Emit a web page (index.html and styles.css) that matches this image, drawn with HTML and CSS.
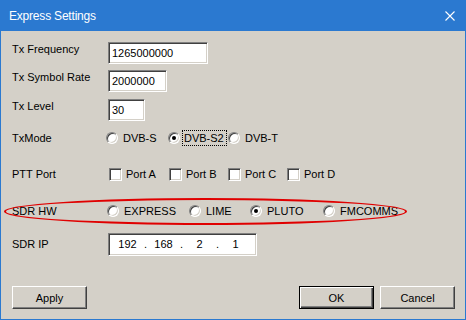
FILE: index.html
```html
<!DOCTYPE html>
<html lang="en">
<head>
  <meta charset="UTF-8">
  <title>Express Settings</title>
  <link rel="stylesheet" href="styles.css">
</head>
<body>
  <div class="window">
    <!-- Title bar -->
    <div class="titlebar">
      <span class="title">Express Settings</span>
      <svg class="close" width="10" height="10" viewBox="0 0 10 10">
        <path d="M0.5 0.5 L9.5 9.5 M9.5 0.5 L0.5 9.5" stroke="#fff" stroke-width="1.1" fill="none"/>
      </svg>
    </div>

    <div class="content">
      <div class="form">
        <div class="row row-text">
          <label class="lbl">Tx Frequency</label>
          <div class="edit edit-freq">1265000000</div>
        </div>
        <div class="row row-text row-sym">
          <label class="lbl">Tx Symbol Rate</label>
          <div class="edit edit-sym">2000000</div>
        </div>
        <div class="row row-text row-level">
          <label class="lbl">Tx Level</label>
          <div class="edit edit-level">30</div>
        </div>

        <div class="row row-opt row-mode">
          <label class="lbl">TxMode</label>
          <div class="opts opts-mode">
            <span class="opt"><i class="radio"></i><span>DVB-S</span></span>
            <span class="opt"><i class="radio on"></i><span class="focus">DVB-S2</span></span>
            <span class="opt"><i class="radio"></i><span>DVB-T</span></span>
          </div>
        </div>

        <div class="row row-opt row-ptt">
          <label class="lbl">PTT Port</label>
          <div class="opts opts-ptt">
            <span class="opt"><i class="check"></i><span>Port A</span></span>
            <span class="opt"><i class="check"></i><span>Port B</span></span>
            <span class="opt"><i class="check"></i><span>Port C</span></span>
            <span class="opt"><i class="check"></i><span>Port D</span></span>
          </div>
        </div>

        <div class="row row-opt row-hw">
          <label class="lbl">SDR HW</label>
          <div class="opts opts-hw">
            <span class="opt"><i class="radio"></i><span>EXPRESS</span></span>
            <span class="opt"><i class="radio"></i><span>LIME</span></span>
            <span class="opt"><i class="radio on"></i><span>PLUTO</span></span>
            <span class="opt"><i class="radio"></i><span>FMCOMMS</span></span>
          </div>
          <!-- red marker ellipse -->
          <div class="mark"></div>
        </div>

        <div class="row row-ip">
          <label class="lbl">SDR IP</label>
          <div class="edit ipbox">
            <span class="oct">192</span><span class="dot">.</span>
            <span class="oct">168</span><span class="dot">.</span>
            <span class="oct">2</span><span class="dot">.</span>
            <span class="oct">1</span>
          </div>
        </div>
      </div>

      <div class="buttons">
        <button class="btn">Apply</button>
        <div class="right">
          <button class="btn btn-default">OK</button>
          <button class="btn">Cancel</button>
        </div>
      </div>
    </div>
  </div>
</body>
</html>
```

FILE: styles.css
```css
* {
  margin: 0;
  padding: 0;
  box-sizing: border-box;
}
body {
  width: 466px;
  height: 320px;
  overflow: hidden;
  font-family: "Liberation Sans", Arial, sans-serif;
  font-size: 11px;
  color: #000;
  background: #d4d0c8;
}
.window {
  width: 466px;
  height: 320px;
  display: flex;
  flex-direction: column;
  border: 1px solid #2b79d0;
  border-top: none;
  background: #d4d0c8;
}
/* Title bar */
.titlebar {
  height: 31px;
  margin: 0 -1px;
  background: #2b79d0;
  display: flex;
  align-items: center;
  justify-content: space-between;
  padding: 0 11px 0 9px;
}
.title {
  color: #fff;
  font-size: 12px;
  letter-spacing: -0.2px;
  padding-top: 1px;
}
.close {
  display: block;
  margin-top: 1px;
}
/* Body */
.content {
  flex: 1;
  display: flex;
  flex-direction: column;
  justify-content: space-between;
  padding: 11px 10px 10px 11px;
}
.form {
  display: flex;
  flex-direction: column;
}
.row {
  display: flex;
  position: relative;
}
.lbl {
  width: 96px;
  flex: none;
  line-height: 13px;
}
.row-text {
  height: 22px;
  align-items: flex-start;
}
.row-text .lbl {
  margin-top: 1px;
}
.row-sym { margin-top: 6px; }
.row-level { margin-top: 7px; }
.row-opt {
  height: 20px;
  align-items: center;
}
.row-mode { margin-top: 7px; }
.row-ptt { margin-top: 16px; }
.row-hw { margin-top: 17px; }
.row-ip {
  margin-top: 12px;
  height: 23px;
  align-items: center;
}
/* Sunken edit box */
.edit {
  height: 22px;
  background: #fff;
  border: 1px solid;
  border-color: #808080 #fff #fff #808080;
  box-shadow: inset 1px 1px 0 #404040, inset -1px -1px 0 #d4d0c8;
  padding: 0 3px;
  line-height: 20px;
  white-space: nowrap;
}
.edit-freq { width: 100px; }
.edit-sym { width: 59px; }
.edit-level { width: 37px; }
.ipbox {
  width: 149px;
  height: 23px;
  display: flex;
  padding: 0 0 0 1px;
  line-height: 21px;
}
.oct {
  width: 35px;
  text-align: center;
}
.dot {
  width: 1px;
  display: flex;
  justify-content: center;
}
/* Option groups */
.opts {
  display: grid;
  align-items: center;
}
.opts-mode {
  margin-left: -2px;
  grid-template-columns: 62px 60px auto;
}
.opts-ptt {
  margin-left: 1px;
  grid-template-columns: 60px 59px 59px auto;
}
.opts-hw {
  margin-left: -1px;
  grid-template-columns: 82px 61px 73px auto;
}
.opt {
  display: flex;
  align-items: center;
  white-space: nowrap;
}
.radio {
  width: 12px;
  height: 12px;
  flex: none;
  border-radius: 50%;
  background: #fff;
  border: 1px solid;
  border-color: #808080 #fff #fff #808080;
  box-shadow: inset 1px 1px 0 #404040, inset -1px -1px 0 #d4d0c8;
  margin-right: 5px;
  display: flex;
  align-items: center;
  justify-content: center;
}
.radio.on::after {
  content: "";
  width: 4px;
  height: 4px;
  border-radius: 50%;
  background: #000;
}
.check {
  width: 13px;
  height: 13px;
  flex: none;
  background: #fff;
  border: 1px solid;
  border-color: #808080 #fff #fff #808080;
  box-shadow: inset 1px 1px 0 #404040, inset -1px -1px 0 #d4d0c8;
  margin-right: 4px;
}
.focus {
  outline: 1px dotted #000;
  outline-offset: 1px;
  padding: 0 1px 0 0;
  margin-left: -1px;
}
/* Red annotation ellipse over the SDR HW row */
.mark {
  position: absolute;
  left: -8px;
  top: -3px;
  width: 403px;
  height: 27px;
  border: 2px solid #e00000;
  border-radius: 50%;
  pointer-events: none;
}
/* Buttons */
.buttons {
  display: flex;
  justify-content: space-between;
  align-items: flex-end;
}
.right {
  display: flex;
  gap: 6px;
}
.btn {
  width: 75px;
  height: 23px;
  font-family: inherit;
  font-size: 11px;
  color: #000;
  background: #d4d0c8;
  border: 1px solid;
  border-color: #fff #404040 #404040 #fff;
  box-shadow: inset -1px -1px 0 #808080;
}
.btn-default {
  border-color: #000;
  box-shadow: inset 1px 1px 0 #fff, inset -1px -1px 0 #404040, inset -2px -2px 0 #808080;
}
```
